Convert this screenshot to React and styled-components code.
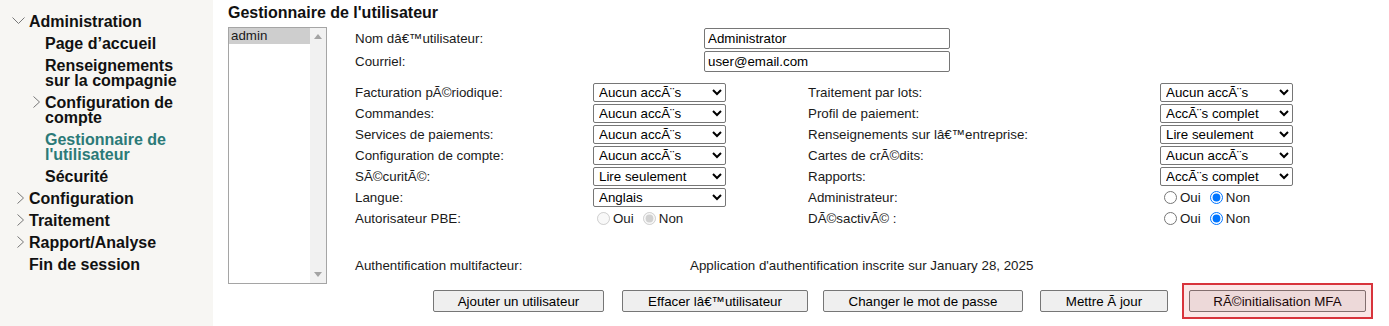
import React from 'react';
import styled, { createGlobalStyle } from 'styled-components';

const GlobalStyle = createGlobalStyle`
  body {
    margin: 0;
    background: #fff;
    font-family: "Liberation Sans", Arial, sans-serif;
    color: #1a1a1a;
  }
`;

const Page = styled.div`
  display: flex;
  min-height: 326px;
`;

const Sidebar = styled.nav`
  width: 213px;
  flex-shrink: 0;
  background: #f7f6f3;
  padding-top: 10px;
  box-sizing: border-box;
`;

const NavRow = styled.div`
  display: flex;
  align-items: flex-start;
  padding: 3.5px 0 3.5px ${(p) => (p.$level ? 28 : 12)}px;
`;

const ChevronSlot = styled.span`
  width: 17px;
  height: 15px;
  flex-shrink: 0;
  display: flex;
  align-items: center;
  justify-content: ${(p) => (p.$dir === 'down' ? 'flex-start' : 'center')};
`;

const NavText = styled.span`
  font-size: 16px;
  font-weight: 700;
  line-height: 15px;
  max-width: 150px;
  color: ${(p) => (p.$active ? '#2b7a78' : '#111')};
`;

const Main = styled.main`
  flex: 1;
  padding: 4px 0 0 15px;
`;

const Title = styled.h1`
  font-size: 16px;
  font-weight: 700;
  line-height: 18px;
  margin: 0 0 5px;
  color: #111;
`;

const Body = styled.div`
  display: flex;
  align-items: flex-start;
`;

const ListBox = styled.div`
  width: 97px;
  height: 255px;
  border: 1px solid #a5a5a5;
  display: flex;
  flex-shrink: 0;
  background: #fff;
`;

const ListItems = styled.div`
  flex: 1;
`;

const ListItem = styled.div`
  font-size: 13.33px;
  line-height: 16px;
  padding-left: 2px;
  background: ${(p) => (p.$selected ? '#cecece' : 'transparent')};
`;

const ScrollTrack = styled.div`
  width: 16px;
  background: #f1f1f1;
  display: flex;
  flex-direction: column;
  justify-content: space-between;
  align-items: center;
  padding: 6px 0;
`;

const Form = styled.div`
  margin-left: 28px;
  font-size: 13.33px;
`;

const Grid = styled.div`
  display: grid;
  grid-template-columns: ${(p) => p.$cols};
  grid-auto-rows: ${(p) => p.$row}px;
  align-items: center;
  margin-top: ${(p) => p.$top || 0}px;
`;

const Label = styled.span`
  white-space: nowrap;
`;

const TextInput = styled.input`
  width: 246px;
  height: 21px;
  box-sizing: border-box;
  border: 1px solid #767676;
  border-radius: 2px;
  padding: 1px 3px;
  font: 13.33px "Liberation Sans", Arial, sans-serif;
  color: #000;
`;

const Select = styled.select`
  width: 133px;
  height: 19px;
  font: 13.33px "Liberation Sans", Arial, sans-serif;
  color: #000;
  border: 1px solid #767676;
  border-radius: 2px;
  background: #fff;
  padding: 0 0 0 1px;
`;

const RadioGroup = styled.div`
  display: flex;
  align-items: center;
`;

const RadioLabel = styled.label`
  display: flex;
  align-items: center;
  margin-right: 5px;
  color: #1a1a1a;
`;

const Radio = styled.input`
  width: 13px;
  height: 13px;
  margin: 0 3px 0 4px;
`;

const ButtonRow = styled.div`
  display: flex;
  align-items: center;
  margin: 15px 0 0 78px;
`;

const Button = styled.button`
  width: ${(p) => p.$w}px;
  height: 22px;
  margin-left: ${(p) => p.$gap || 0}px;
  padding: 0;
  font: 13.33px "Liberation Sans", Arial, sans-serif;
  color: #000;
  background: #efefef;
  border: 1px solid #767676;
  border-radius: 2px;
`;

const Highlight = styled.span`
  position: relative;
  display: inline-flex;
  margin-left: 21px;

  &::after {
    content: '';
    position: absolute;
    inset: -7px;
    border: 2px solid #d8343c;
    background: rgba(220, 60, 60, 0.12);
    pointer-events: none;
  }
`;

const Chevron = ({ dir }) =>
  dir === 'down' ? (
    <svg width="13" height="8" viewBox="0 0 13 8">
      <polyline points="0.5,0.5 6.5,6.5 12.5,0.5" fill="none" stroke="#777" strokeWidth="1" />
    </svg>
  ) : (
    <svg width="8" height="12" viewBox="0 0 8 12">
      <polyline points="0.5,0.5 6.5,6 0.5,11.5" fill="none" stroke="#777" strokeWidth="1" />
    </svg>
  );

const Arrow = ({ up }) => (
  <svg width="8" height="5" viewBox="0 0 8 5">
    <polygon points={up ? '0,5 4,0 8,5' : '0,0 8,0 4,5'} fill="#a3a3a3" />
  </svg>
);

const nav = [
  { label: 'Administration', level: 0, chevron: 'down' },
  { label: 'Page d’accueil', level: 1 },
  { label: 'Renseignements sur la compagnie', level: 1 },
  { label: 'Configuration de compte', level: 1, chevron: 'right' },
  { label: "Gestionnaire de l'utilisateur", level: 1, active: true },
  { label: 'Sécurité', level: 1 },
  { label: 'Configuration', level: 0, chevron: 'right' },
  { label: 'Traitement', level: 0, chevron: 'right' },
  { label: 'Rapport/Analyse', level: 0, chevron: 'right' },
  { label: 'Fin de session', level: 0 },
];

const NONE = 'Aucun accÃ¨s';
const READ = 'Lire seulement';
const FULL = 'AccÃ¨s complet';

const access = [
  ['Facturation pÃ©riodique:', NONE, 'Traitement par lots:', NONE],
  ['Commandes:', NONE, 'Profil de paiement:', FULL],
  ['Services de paiements:', NONE, 'Renseignements sur lâ€™entreprise:', READ],
  ['Configuration de compte:', NONE, 'Cartes de crÃ©dits:', NONE],
  ['SÃ©curitÃ©:', READ, 'Rapports:', FULL],
];

const AccessSelect = ({ value }) => (
  <Select defaultValue={value}>
    <option>{NONE}</option>
    <option>{READ}</option>
    <option>{FULL}</option>
  </Select>
);

const YesNo = ({ name, disabled }) => (
  <RadioGroup>
    <RadioLabel>
      <Radio type="radio" name={name} disabled={disabled} />
      Oui
    </RadioLabel>
    <RadioLabel>
      <Radio type="radio" name={name} disabled={disabled} defaultChecked />
      Non
    </RadioLabel>
  </RadioGroup>
);

const App = () => (
  <Page>
    <GlobalStyle />
    <Sidebar>
      {nav.map((item) => (
        <NavRow key={item.label} $level={item.level}>
          <ChevronSlot $dir={item.chevron}>
            {item.chevron && <Chevron dir={item.chevron} />}
          </ChevronSlot>
          <NavText $active={item.active}>{item.label}</NavText>
        </NavRow>
      ))}
    </Sidebar>
    <Main>
      <Title>Gestionnaire de l'utilisateur</Title>
      <Body>
        <ListBox>
          <ListItems>
            <ListItem $selected>admin</ListItem>
          </ListItems>
          <ScrollTrack>
            <Arrow up />
            <Arrow />
          </ScrollTrack>
        </ListBox>
        <Form>
          <Grid $cols="349px 246px" $row={23}>
            <Label>Nom dâ€™utilisateur:</Label>
            <TextInput defaultValue="Administrator" />
            <Label>Courriel:</Label>
            <TextInput defaultValue="user@email.com" />
          </Grid>
          <Grid $cols="238px 133px 82px 352px 133px" $row={21} $top={9}>
            {access.map(([l1, v1, l2, v2]) => (
              <React.Fragment key={l1}>
                <Label>{l1}</Label>
                <AccessSelect value={v1} />
                <span />
                <Label>{l2}</Label>
                <AccessSelect value={v2} />
              </React.Fragment>
            ))}
            <Label>Langue:</Label>
            <Select defaultValue="Anglais">
              <option>Anglais</option>
              <option>FranÃ§ais</option>
            </Select>
            <span />
            <Label>Administrateur:</Label>
            <YesNo name="admin" />
            <Label>Autorisateur PBE:</Label>
            <YesNo name="pbe" disabled />
            <span />
            <Label>DÃ©sactivÃ© :</Label>
            <YesNo name="off" />
          </Grid>
          <Grid $cols="335px auto" $row={20} $top={26}>
            <Label>Authentification multifacteur:</Label>
            <Label>Application d'authentification inscrite sur January 28, 2025</Label>
          </Grid>
          <ButtonRow>
            <Button $w={171}>Ajouter un utilisateur</Button>
            <Button $w={186} $gap={18}>Effacer lâ€™utilisateur</Button>
            <Button $w={200} $gap={15}>Changer le mot de passe</Button>
            <Button $w={128} $gap={17}>Mettre Ã&nbsp;jour</Button>
            <Highlight>
              <Button $w={177}>RÃ©initialisation MFA</Button>
            </Highlight>
          </ButtonRow>
        </Form>
      </Body>
    </Main>
  </Page>
);

export default App;
